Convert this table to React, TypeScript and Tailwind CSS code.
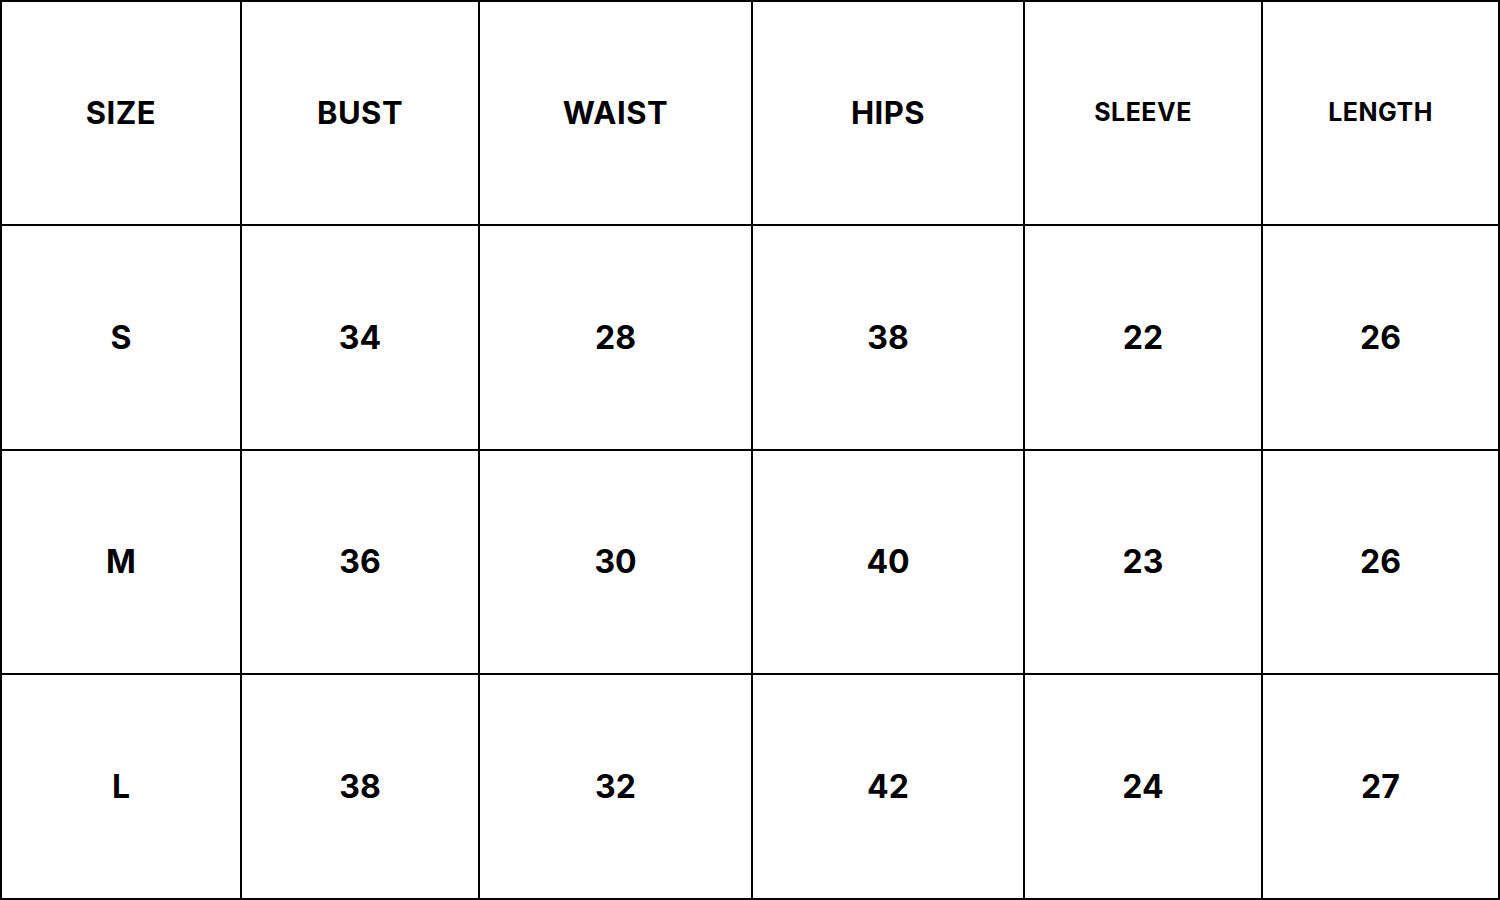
const header = ["SIZE", "BUST", "WAIST", "HIPS", "SLEEVE", "LENGTH"];

const rows = [
  ["S", "34", "28", "38", "22", "26"],
  ["M", "36", "30", "40", "23", "26"],
  ["L", "38", "32", "42", "24", "27"],
];

// last two header labels are set smaller in the chart
const small = new Set(["SLEEVE", "LENGTH"]);

export default function App() {
  return (
    <div className="h-[900px] w-[1500px] bg-white text-black [font-family:Inter,'Noto_Sans',sans-serif]">
      <div className="grid h-full w-full grid-cols-[240px_238px_273px_272px_238px_237px] grid-rows-[224px_225px_224px_225px] border-l-2 border-t-2 border-black">
        {header.map((label) => (
          <div
            key={label}
            className={`flex items-center justify-center border-b-2 border-r-2 border-black font-bold ${
              small.has(label) ? "text-[25px] tracking-[0.5px]" : "text-[31px] tracking-[0.5px]"
            }`}
          >
            {label}
          </div>
        ))}
        {rows.map((row, r) =>
          row.map((value, c) => (
            <div
              key={`${r}-${c}`}
              className="flex items-center justify-center border-b-2 border-r-2 border-black text-[32px] font-bold"
            >
              {value}
            </div>
          ))
        )}
      </div>
    </div>
  );
}
